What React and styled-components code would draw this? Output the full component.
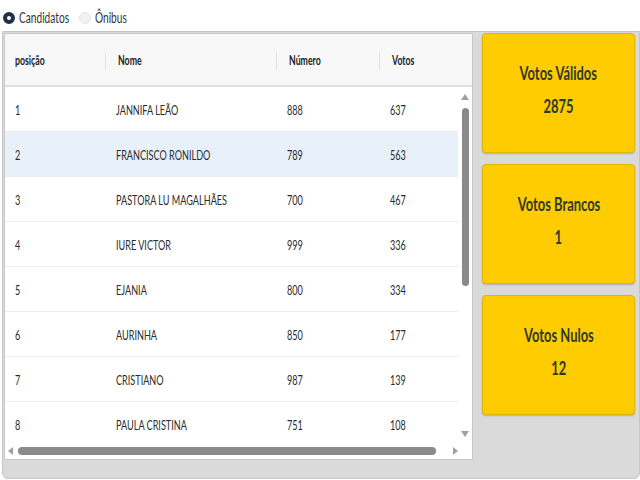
import React from 'react';
import styled, { createGlobalStyle } from 'styled-components';

const GlobalStyle = createGlobalStyle`
  html, body {
    margin: 0;
    padding: 0;
    background: #ffffff;
    font-family: Lato, "Open Sans", sans-serif;
  }
`;

// the screenshot text is narrow, so every label is squeezed horizontally
const NarrowText = styled.span`
  display: inline-block;
  white-space: nowrap;
  transform: scaleX(0.7);
  transform-origin: ${(p) => (p.center ? 'center' : 'left')} center;
`;

const PageStyled = styled.div`
  width: 640px;
  height: 480px;
  display: flex;
  flex-direction: column;
  overflow: hidden;
`;

const RadioBarStyled = styled.div`
  height: 31px;
  display: flex;
  align-items: center;
  gap: 6px;
  padding: 4px 0 0 3px;
  box-sizing: border-box;
`;

const RadioLabelStyled = styled.label`
  display: flex;
  align-items: center;
  gap: 4px;
  font-size: 14.5px;
  color: #333;
  width: ${(p) => p.w}px;
`;

const RadioDotStyled = styled.span`
  flex: none;
  width: 12px;
  height: 12px;
  border-radius: 50%;
  box-sizing: border-box;
  background: ${(p) => (p.checked ? '#fff' : '#f1f1f1')};
  border: ${(p) => (p.checked ? '4px solid #1f3047' : '1px solid #e6e6e6')};
`;

const PanelStyled = styled.div`
  flex: 1;
  margin-left: 2px;
  margin-bottom: 1px;
  background: #dadada;
  border: 1px solid #c6c6c6;
  border-radius: 0 0 6px 6px;
  display: flex;
  gap: 9px;
  padding: 1px 4px 0 1px;
`;

const TableWrapperStyled = styled.div`
  width: 470px;
  height: 427px;
  background: #fff;
  border: 1px solid #c9c9c9;
  box-sizing: border-box;
  display: grid;
  grid-template-columns: 1fr 14px;
  grid-template-rows: 53px 1fr 16px;
`;

const HeaderStyled = styled.div`
  grid-column: 1 / 3;
  background: #f8f8f8;
  border-bottom: 2px solid #dedede;
  display: grid;
  grid-template-columns: 100px 171px 103px 1fr;
  align-items: center;
  padding-top: 3px;
`;

const HeadCellStyled = styled.div`
  font-size: 12.5px;
  font-weight: bold;
  color: #222;
  padding-left: ${(p) => (p.first ? 10 : 12)}px;
  border-left: ${(p) => (p.first ? 'none' : '1px solid #e2e2e2')};
  line-height: 18px;
`;

const BodyStyled = styled.div`
  overflow: hidden;
`;

const RowStyled = styled.div`
  height: 45px;
  box-sizing: border-box;
  border-bottom: 1px solid #ececec;
  background: ${(p) => (p.selected ? '#e8f1fa' : '#fff')};
  display: grid;
  grid-template-columns: 101px 171px 103px 1fr;
  align-items: center;
  padding-top: 1px;
`;

const CellStyled = styled.div`
  font-size: 13px;
  color: #2a2a2a;
  padding-left: 10px;
`;

const VScrollStyled = styled.div`
  display: flex;
  flex-direction: column;
  align-items: center;
  padding: 7px 0 6px;
  gap: 8px;
`;

const VThumbStyled = styled.div`
  width: 7px;
  height: 178px;
  border-radius: 4px;
  background: #8a8a8a;
`;

const HScrollStyled = styled.div`
  grid-column: 1 / 3;
  display: flex;
  align-items: center;
  padding: 0 14px 0 3px;
  gap: 5px;
`;

const HThumbStyled = styled.div`
  width: 418px;
  height: 8px;
  border-radius: 4px;
  background: #8a8a8a;
`;

const SpacerStyled = styled.div`
  flex: 1;
`;

const CardsStyled = styled.div`
  display: flex;
  flex-direction: column;
  gap: 11px;
  width: 153px;
`;

const CardStyled = styled.div`
  height: 120px;
  background: #fecc00;
  border: 1px solid #e2b500;
  border-radius: 4px;
  box-sizing: border-box;
  box-shadow: 0 1px 2px rgba(0, 0, 0, 0.2);
  display: flex;
  flex-direction: column;
  align-items: center;
  justify-content: center;
  gap: 9px;
  color: #2d3a2c;
  font-weight: bold;
  font-size: 18.5px;
  line-height: 24px;
  padding-bottom: 8px;
`;

const Arrow = ({ dir }) => {
  const pts = {
    up: '0,6 4,0 8,6',
    down: '0,0 4,6 8,0',
    left: '5,0 0,4 5,8',
    right: '0,0 5,4 0,8',
  }[dir];
  const horiz = dir === 'left' || dir === 'right';
  return (
    <svg width={horiz ? 5 : 8} height={horiz ? 8 : 6} viewBox={horiz ? '0 0 5 8' : '0 0 8 6'}>
      <polygon points={pts} fill="#a0a0a0" />
    </svg>
  );
};

const rows = [
  ['1', 'JANNIFA LEÃO', '888', '637'],
  ['2', 'FRANCISCO RONILDO', '789', '563'],
  ['3', 'PASTORA LU MAGALHÃES', '700', '467'],
  ['4', 'IURE VICTOR', '999', '336'],
  ['5', 'EJANIA', '800', '334'],
  ['6', 'AURINHA', '850', '177'],
  ['7', 'CRISTIANO', '987', '139'],
  ['8', 'PAULA CRISTINA', '751', '108'],
];

const cards = [
  ['Votos Válidos', '2875'],
  ['Votos Brancos', '1'],
  ['Votos Nulos', '12'],
];

const App = () => (
  <PageStyled>
    <GlobalStyle />
    <RadioBarStyled>
      <RadioLabelStyled w={70}>
        <RadioDotStyled checked />
        <NarrowText>Candidatos</NarrowText>
      </RadioLabelStyled>
      <RadioLabelStyled w={60}>
        <RadioDotStyled />
        <NarrowText>Ônibus</NarrowText>
      </RadioLabelStyled>
    </RadioBarStyled>
    <PanelStyled>
      <TableWrapperStyled>
        <HeaderStyled>
          <HeadCellStyled first><NarrowText>posição</NarrowText></HeadCellStyled>
          <HeadCellStyled><NarrowText>Nome</NarrowText></HeadCellStyled>
          <HeadCellStyled><NarrowText>Número</NarrowText></HeadCellStyled>
          <HeadCellStyled><NarrowText>Votos</NarrowText></HeadCellStyled>
        </HeaderStyled>
        <BodyStyled>
          {rows.map((r, i) => (
            <RowStyled key={r[0]} selected={i === 1}>
              {r.map((c, j) => (
                <CellStyled key={j}>
                  <NarrowText>{c}</NarrowText>
                </CellStyled>
              ))}
            </RowStyled>
          ))}
        </BodyStyled>
        <VScrollStyled>
          <Arrow dir="up" />
          <VThumbStyled />
          <SpacerStyled />
          <Arrow dir="down" />
        </VScrollStyled>
        <HScrollStyled>
          <Arrow dir="left" />
          <HThumbStyled />
          <SpacerStyled />
          <Arrow dir="right" />
        </HScrollStyled>
      </TableWrapperStyled>
      <CardsStyled>
        {cards.map(([t, v]) => (
          <CardStyled key={t}>
            <NarrowText center>{t}</NarrowText>
            <NarrowText center>{v}</NarrowText>
          </CardStyled>
        ))}
      </CardsStyled>
    </PanelStyled>
  </PageStyled>
);

export default App;
